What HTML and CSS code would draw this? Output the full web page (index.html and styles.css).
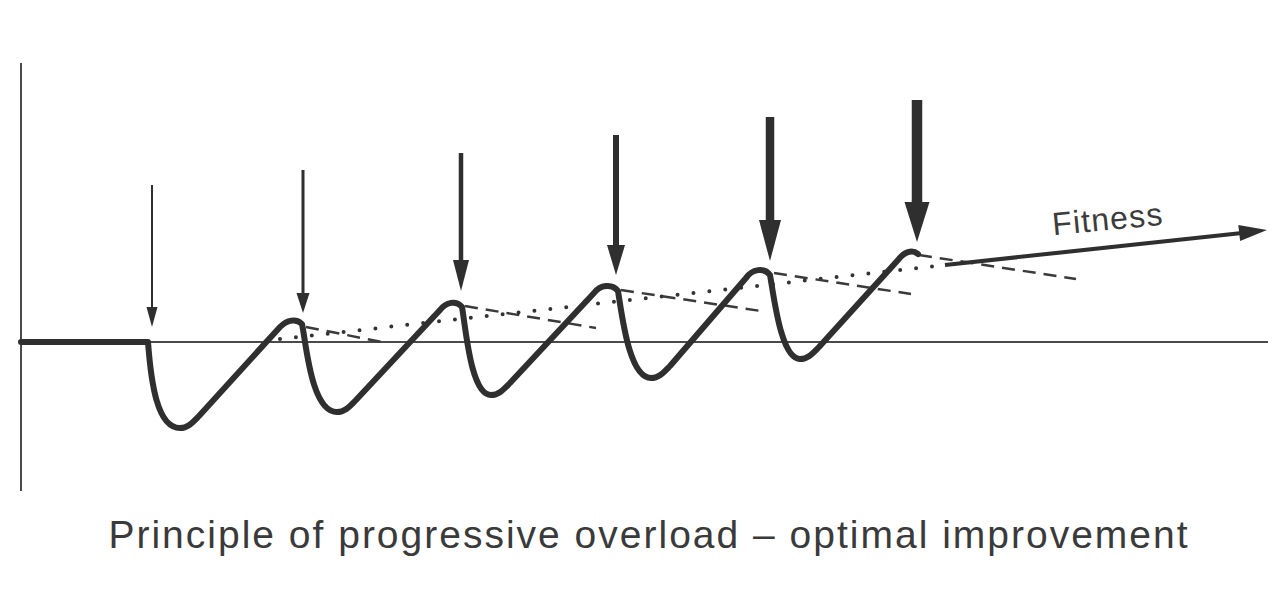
FILE: index.html
```html
<!DOCTYPE html>
<html lang="en">
<head>
<meta charset="utf-8">
<title>Principle of progressive overload</title>
<link rel="stylesheet" href="styles.css">
</head>
<body>
<figure class="figure">
  <svg class="chart" width="1284" height="510" viewBox="0 0 1284 510" xmlns="http://www.w3.org/2000/svg">
    <!-- axes -->
    <line class="axis" x1="21" y1="63" x2="21" y2="491"/>
    <line class="axis" x1="21" y1="342" x2="1268" y2="342"/>

    <!-- trend (dotted) -->
    <line class="dots" x1="280" y1="339" x2="945" y2="265"/>

    <!-- decay lines (dashed) -->
    <line class="dash" x1="306" y1="327" x2="382" y2="342"/>
    <line class="dash" x1="465" y1="306" x2="596" y2="328"/>
    <line class="dash" x1="621" y1="290" x2="761" y2="311"/>
    <line class="dash" x1="774" y1="273" x2="911" y2="294"/>
    <line class="dash" x1="919" y1="255" x2="1076" y2="279"/>

    <!-- fitness curve -->
    <path class="curve" d="M21,342 L148,342
      C151,382 157,428 180,428
      C188,428 193,422 199,416
      L280,327
      C287,320 296,318 302,324
      C306,342 311,412 337,412
      C345,412 350,406 356,400
      L440,310
      C446,302 456,300 462,307
      C466,330 471,395 491,395
      C499,395 504,389 510,383
      L594,293
      C600,285 612,283 618,291
      C622,315 629,378 651,378
      C659,378 664,372 670,366
      L746,278
      C752,269 764,267 770,275
      C774,297 781,359 800,359
      C808,359 813,353 819,347
      L898,260
      C904,252 912,249 918,254"/>

    <!-- load arrows -->
    <g class="load">
      <rect x="151" y="185" width="2" height="126"/>
      <polygon points="146.5,307 157.5,307 152,327"/>
      <rect x="301.5" y="170" width="3" height="126"/>
      <polygon points="296.5,293 309.5,293 303,313"/>
      <rect x="458.75" y="153" width="4.5" height="110"/>
      <polygon points="453,260 469,260 461,291"/>
      <rect x="613" y="135" width="6" height="113"/>
      <polygon points="607,245 625,245 616,275"/>
      <rect x="765.75" y="117" width="8.5" height="106"/>
      <polygon points="759,220 781,220 770,261"/>
      <rect x="911.75" y="100" width="10.5" height="105"/>
      <polygon points="904.5,202 929.5,202 917,242"/>
    </g>

    <!-- fitness arrow -->
    <line class="fit-line" x1="945" y1="265" x2="1242" y2="233"/>
    <polygon class="fit-head" points="1267,230 1238.3,225 1240.1,241"/>
    <text class="fit-label" x="1108" y="230" transform="rotate(-5.5 1108 222)">Fitness</text>
  </svg>
  <figcaption class="caption">Principle of progressive overload – optimal improvement</figcaption>
</figure>
</body>
</html>
```

FILE: styles.css
```css
html, body {
  margin: 0;
  padding: 0;
  background: #ffffff;
}

.figure {
  margin: 0;
  width: 1284px;
  height: 592px;
  overflow: hidden;
  display: flex;
  flex-direction: column;
}

.chart {
  display: block;
  flex: none;
}

.axis {
  stroke: #4a4a4a;
  stroke-width: 2;
}

.curve {
  fill: none;
  stroke: #2f2f2f;
  stroke-width: 6;
  stroke-linecap: round;
  stroke-linejoin: round;
}

.dots {
  stroke: #333333;
  stroke-width: 4;
  stroke-linecap: round;
  stroke-dasharray: 0 16;
}

.dash {
  stroke: #3a3a3a;
  stroke-width: 2.5;
  stroke-dasharray: 13 8;
}

.load rect,
.load polygon {
  fill: #2f2f2f;
}

.fit-line {
  stroke: #2f2f2f;
  stroke-width: 4;
}

.fit-head {
  fill: #2f2f2f;
}

.fit-label {
  font-family: "Liberation Sans", Arial, sans-serif;
  font-size: 32px;
  letter-spacing: 1.2px;
  fill: #3c3c3c;
  text-anchor: middle;
}

.caption {
  font-family: "Liberation Sans", Arial, sans-serif;
  font-size: 39px;
  line-height: 50px;
  letter-spacing: 2px;
  color: #3a3a3a;
  text-align: center;
  padding-left: 14px;
}
```
